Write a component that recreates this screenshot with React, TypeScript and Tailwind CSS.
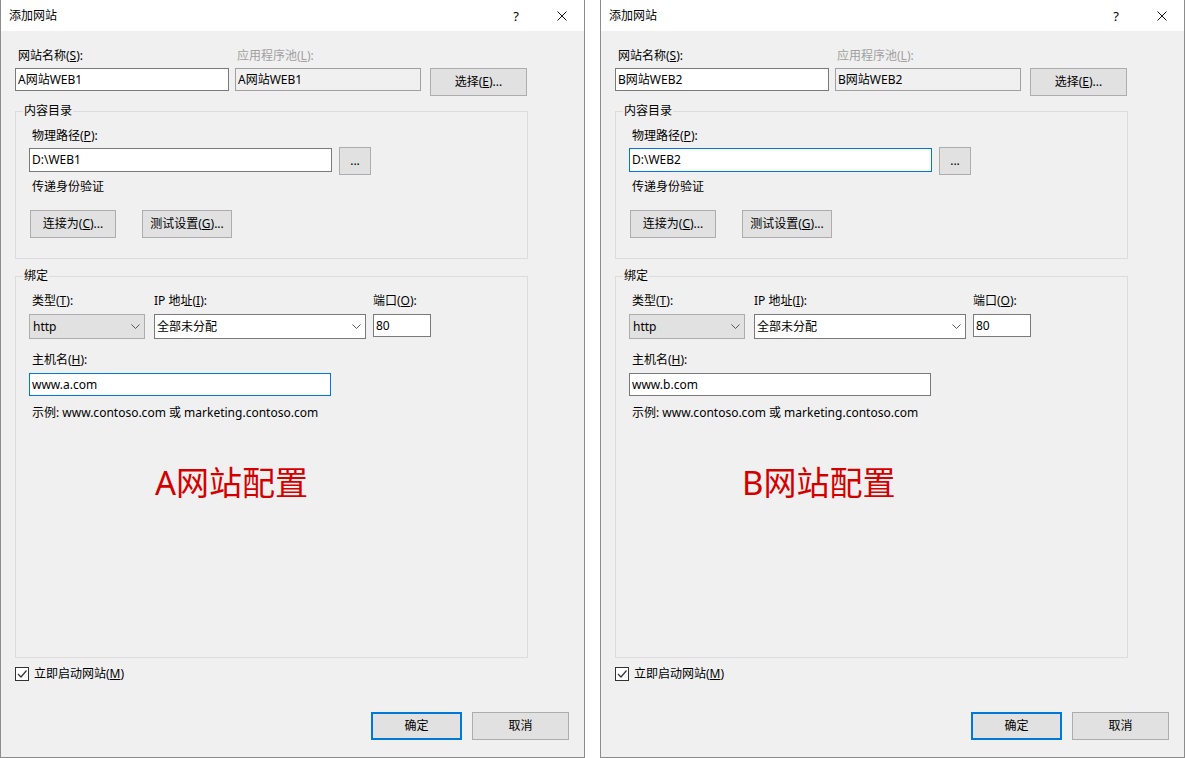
import React from 'react';

type FieldProps = { className?: string; focus?: boolean; children?: React.ReactNode };

const Field = ({ className = '', focus, children }: FieldProps) => (
  <div
    className={`flex h-[23px] items-center border pl-[2px] whitespace-nowrap ${
      focus ? 'border-[#0078d7]' : 'border-[#7a7a7a]'
    } bg-white ${className}`}
  >
    {children}
  </div>
);

const Btn = ({ className = '', primary, children }: { className?: string; primary?: boolean; children: React.ReactNode }) => (
  <div
    className={`flex h-[28px] shrink-0 items-center justify-center bg-[#e1e1e1] whitespace-nowrap ${
      primary ? 'border-2 border-[#0078d7]' : 'border border-[#adadad]'
    } ${className}`}
  >
    {children}
  </div>
);

const Chevron = () => (
  <svg width="9" height="6" viewBox="0 0 9 6" className="ml-auto mr-[4px] shrink-0">
    <polyline points="0.5,0.5 4.5,4.5 8.5,0.5" fill="none" stroke="#555" strokeWidth="1" />
  </svg>
);

type DialogProps = {
  letter: string;
  num: number;
  focus: 'path' | 'host';
  noteMl: string;
};

const Dialog = ({ letter, num, focus, noteMl }: DialogProps) => (
  <div className="flex h-[758px] w-[585px] shrink-0 flex-col border-x border-b border-[#8c8c8c] bg-[#f0f0f0] text-[12px] leading-[16px] text-black">
    {/* title bar */}
    <div className="flex h-[31px] shrink-0 items-center bg-white pl-[8px]">
      <span>添加网站</span>
      <span className="ml-auto w-[14px] text-center text-[13px]">?</span>
      <svg width="10" height="10" viewBox="0 0 10 10" className="ml-[34px] mr-[17px]">
        <path d="M0.5 0.5 L9.5 9.5 M9.5 0.5 L0.5 9.5" stroke="#111" strokeWidth="1" />
      </svg>
    </div>

    <div className="flex flex-1 flex-col pl-[14px] pt-[17px]">
      <div className="flex">
        <div className="w-[220px] pl-[3px]">
          网站名称(<u>S</u>):
        </div>
        <div className="pl-[2px] text-[#a0a0a0]">
          应用程序池(<u>L</u>):
        </div>
      </div>
      <div className="mt-[4px] flex items-start">
        <Field className="w-[214px]">{letter}网站WEB{num}</Field>
        <div className="ml-[6px] flex h-[23px] w-[186px] items-center border border-[#a0a0a0] bg-[#f0f0f0] pl-[2px]">
          {letter}网站WEB{num}
        </div>
        <Btn className="ml-[9px] w-[97px]">
          选择(<u>E</u>)...
        </Btn>
      </div>

      {/* 内容目录 */}
      <fieldset className="mt-[7px] h-[156px] w-[513px] border border-[#dcdcdc] p-0">
        <legend className="ml-[7px] px-[1px] leading-[16px]">内容目录</legend>
        <div className="flex flex-col pl-[13px]">
          <div className="mt-[9px] pl-[3px]">
            物理路径(<u>P</u>):
          </div>
          <div className="mt-[4px] flex items-start">
            <Field className="h-[24px] w-[303px]" focus={focus === 'path'}>
              D:\WEB{num}
            </Field>
            <Btn className="-mt-[1px] ml-[7px] w-[32px]">...</Btn>
          </div>
          <div className="mt-[4px] pl-[3px]">传递身份验证</div>
          <div className="mt-[15px] flex pl-[1px]">
            <Btn className="w-[86px]">
              连接为(<u>C</u>)...
            </Btn>
            <Btn className="ml-[26px] w-[90px]">
              测试设置(<u>G</u>)...
            </Btn>
          </div>
        </div>
      </fieldset>

      {/* 绑定 */}
      <fieldset className="mt-[9px] h-[390px] w-[513px] border border-[#dcdcdc] p-0">
        <legend className="ml-[7px] px-[1px] leading-[16px]">绑定</legend>
        <div className="flex flex-col pl-[13px]">
          <div className="mt-[9px] flex items-start">
            <div className="flex w-[116px] flex-col">
              <div className="pl-[3px]">
                类型(<u>T</u>):
              </div>
              <div className="mt-[5px] flex h-[25px] items-center border border-[#adadad] bg-[#e1e1e1] pl-[3px]">
                http
                <Chevron />
              </div>
            </div>
            <div className="ml-[9px] flex w-[212px] flex-col">
              <div>
                IP 地址(<u>I</u>):
              </div>
              <div className="mt-[5px] flex h-[25px] items-center border border-[#7a7a7a] bg-white pl-[2px]">
                全部未分配
                <Chevron />
              </div>
            </div>
            <div className="ml-[7px] flex w-[58px] flex-col">
              <div>
                端口(<u>O</u>):
              </div>
              <Field className="mt-[5px]">80</Field>
            </div>
          </div>
          <div className="mt-[13px] pl-[3px]">
            主机名(<u>H</u>):
          </div>
          <Field className="mt-[5px] w-[302px]" focus={focus === 'host'}>
            www.{letter.toLowerCase()}.com
          </Field>
          <div className="mt-[9px] pl-[3px]">示例: www.contoso.com 或 marketing.contoso.com</div>
          <div className={`mt-[44px] text-[33px] leading-[36px] text-[#d40000] ${noteMl}`}>{letter}网站配置</div>
        </div>
      </fieldset>

      <div className="mt-[9px] flex h-[14px] items-center">
        <div className="flex h-[14px] w-[14px] items-center justify-center border border-[#333] bg-white">
          <svg width="12" height="12" viewBox="0 0 12 12">
            <polyline points="2,6 5,9 10.5,2.5" fill="none" stroke="#333" strokeWidth="1.2" />
          </svg>
        </div>
        <span className="ml-[5px]">
          立即启动网站(<u>M</u>)
        </span>
      </div>

      <div className="mt-[31px] flex justify-end pr-[15px]">
        <Btn primary className="w-[91px]">
          确定
        </Btn>
        <Btn className="ml-[10px] w-[97px]">取消</Btn>
      </div>
    </div>
  </div>
);

export default function App() {
  return (
    <div className="flex h-[758px] w-[1185px] gap-[15px] overflow-hidden bg-white font-['Noto_Sans','Noto_Sans_CJK_SC',sans-serif]">
      <Dialog letter="A" num={1} focus="host" noteMl="ml-[126px]" />
      <Dialog letter="B" num={2} focus="path" noteMl="ml-[113px]" />
    </div>
  );
}
